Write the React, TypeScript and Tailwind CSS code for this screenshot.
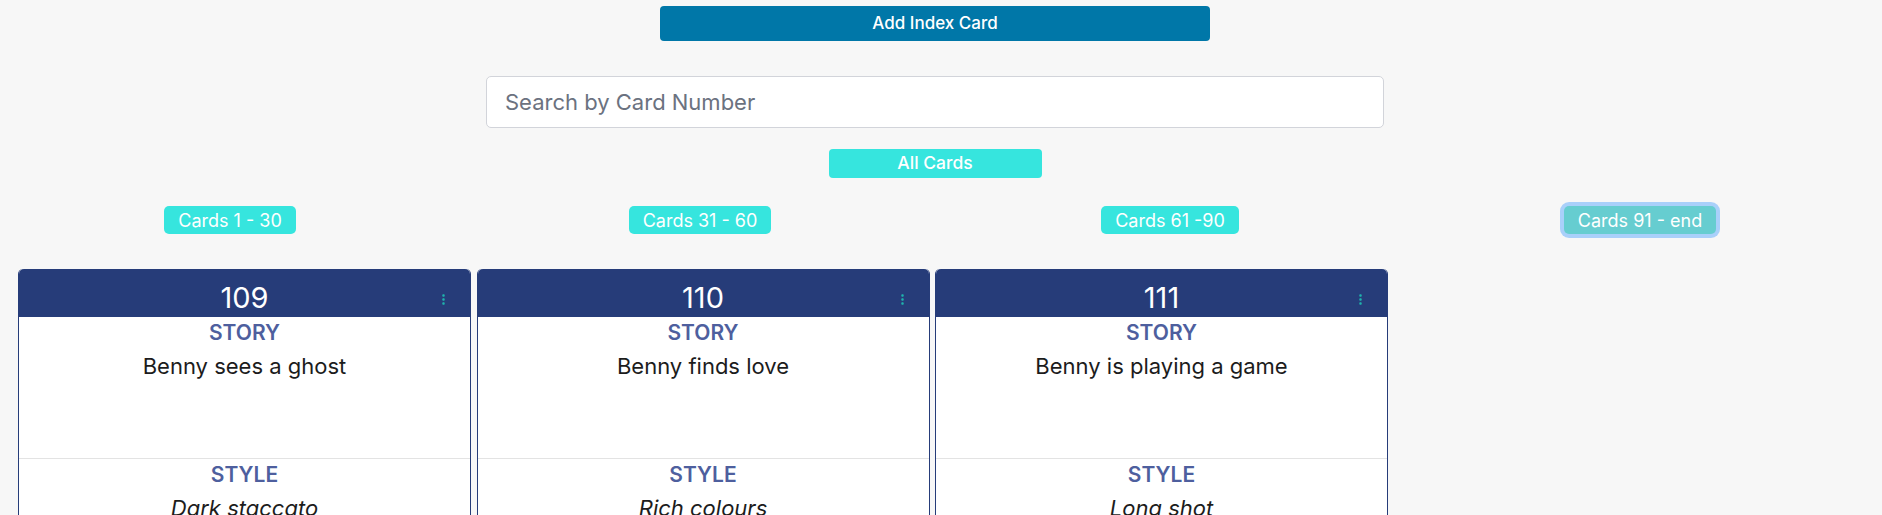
import React from "react";

type IndexCard = {
  id: number;
  story: string;
  style: string;
};

const cards: IndexCard[] = [
  { id: 109, story: "Benny sees a ghost", style: "Dark staccato" },
  { id: 110, story: "Benny finds love", style: "Rich colours" },
  { id: 111, story: "Benny is playing a game", style: "Long shot" },
];

const ranges = [
  { label: "Cards 1 - 30", active: false },
  { label: "Cards 31 - 60", active: false },
  { label: "Cards 61 -90", active: false },
  { label: "Cards 91 - end", active: true },
];

const KebabIcon = () => (
  <svg width="3" height="12" viewBox="0 0 3 12" className="block">
    <rect x="0.3" y="0.3" width="2.4" height="2.4" rx="0.8" fill="#1fb3ad" />
    <rect x="0.3" y="4.3" width="2.4" height="2.4" rx="0.8" fill="#1fb3ad" />
    <rect x="0.3" y="8.3" width="2.4" height="2.4" rx="0.8" fill="#1fb3ad" />
  </svg>
);

const Card = ({ card }: { card: IndexCard }) => {
  return (
    <div className="w-[453px] shrink-0 rounded-t-[5px] border border-t-0 border-[#263c79] bg-white">
      {/* Header */}
      <div className="relative h-[48px] rounded-t-[5px] bg-[#263c79] pt-[11px] text-center">
        <span className="text-[29px] leading-[36px] text-white">{card.id}</span>
        <div className="absolute right-[25px] top-[25px]">
          <KebabIcon />
        </div>
      </div>

      {/* Story */}
      <div className="h-[141px] text-center">
        <div className="text-[21px] font-semibold leading-[32px] text-[#4e5f9e]">STORY</div>
        <p className="mt-[2px] text-[22px] leading-[30px] text-[#1c1c1c]">{card.story}</p>
      </div>

      {/* Style */}
      <div className="border-t border-[#e3e3e3] text-center">
        <div className="text-[21px] font-semibold leading-[32px] text-[#4e5f9e]">STYLE</div>
        <p className="mt-[2px] text-[22px] italic leading-[30px] text-[#1c1c1c]">{card.style}</p>
        <div className="h-[60px]" />
      </div>
    </div>
  );
};

export default function App() {
  return (
    <div
      className="min-h-[515px] overflow-hidden bg-[#f7f7f7]"
      style={{ fontFamily: "Inter, 'Noto Sans', sans-serif" }}
    >
      <div className="flex w-[1870px] flex-col items-center pt-[6px]">
        <button className="h-[35px] w-[550px] rounded-[4px] bg-[#0077a8] text-[17px] font-medium text-white">
          Add Index Card
        </button>

        <input
          type="text"
          placeholder="Search by Card Number"
          className="mt-[35px] h-[52px] w-[898px] rounded-[5px] border border-[#d2d4da] bg-white px-[18px] text-[22px] text-[#212529] outline-none placeholder:text-[#6b7280]"
        />

        <button className="mt-[21px] h-[29px] w-[213px] rounded-[4px] bg-[#36e5de] text-[17.5px] font-medium text-white">
          All Cards
        </button>
      </div>

      {/* Range filters */}
      <div className="ml-[-5px] mt-[28px] grid w-[1880px] grid-cols-4">
        {ranges.map((r) => (
          <div key={r.label} className="flex justify-center">
            <button
              className={
                r.active
                  ? "h-[28px] rounded-[5px] bg-[#66cdd0] px-[14px] text-[18px] text-white ring-4 ring-[#a9d0fa]"
                  : "h-[28px] rounded-[5px] bg-[#36e5de] px-[14px] text-[18px] text-white"
              }
            >
              {r.label}
            </button>
          </div>
        ))}
      </div>

      {/* Cards */}
      <div className="mt-[35px] flex gap-[5.5px] pl-[18px]">
        {cards.map((c) => (
          <Card key={c.id} card={c} />
        ))}
      </div>
    </div>
  );
}
